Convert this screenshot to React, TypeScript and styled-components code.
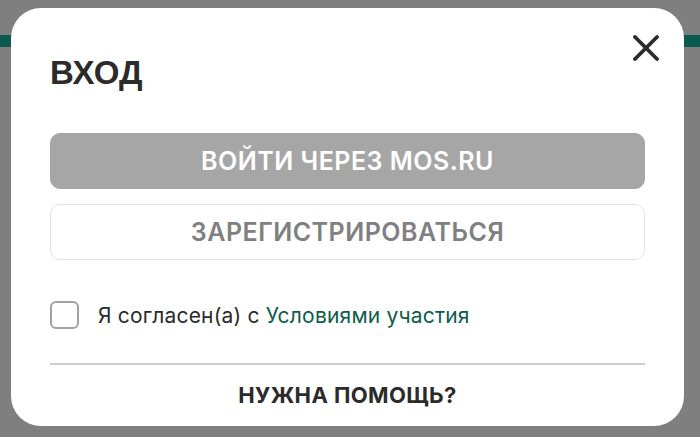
import styled, { createGlobalStyle } from "styled-components";

const GlobalStyle = createGlobalStyle`
  html, body {
    margin: 0;
    padding: 0;
    background: #7f7f7f;
  }
  body {
    font-family: Inter, "Noto Sans", sans-serif;
  }
  * {
    box-sizing: border-box;
  }
`;

function CloseIcon() {
  return (
    <svg width="26" height="26" viewBox="0 0 26 26" aria-hidden="true">
      <path
        d="M2 2 L24 24 M24 2 L2 24"
        stroke="#2b2b2b"
        strokeWidth="3.8"
        strokeLinecap="round"
      />
    </svg>
  );
}

function App() {
  return (
    <>
      <GlobalStyle />
      <Backdrop>
        <TealStrip />
        <Modal>
          <Header>
            <Title>ВХОД</Title>
            <CloseButton aria-label="Закрыть">
              <CloseIcon />
            </CloseButton>
          </Header>
          <Actions>
            <Button $variant="primary">ВОЙТИ ЧЕРЕЗ MOS.RU</Button>
            <Button $variant="outline">ЗАРЕГИСТРИРОВАТЬСЯ</Button>
          </Actions>
          <Agreement>
            <CheckBox />
            <span>
              Я согласен(а) с <AgreementLink href="#">Условиями участия</AgreementLink>
            </span>
          </Agreement>
          <Divider />
          <HelpLink>НУЖНА ПОМОЩЬ?</HelpLink>
        </Modal>
      </Backdrop>
    </>
  );
}

export default App;

const Backdrop = styled.div`
  position: relative;
  width: 700px;
  height: 437px;
  padding: 8px 16px 0 11px;
  background: #7f7f7f;
  overflow: hidden;
`;

const TealStrip = styled.div`
  position: absolute;
  left: 0;
  right: 0;
  top: 35px;
  height: 12px;
  background: #0b5a50;
`;

const Modal = styled.div`
  position: relative;
  width: 673px;
  height: 418px;
  padding: 26px 39px 0 39px;
  background: #fff;
  border-radius: 30px;
`;

const Header = styled.div`
  display: flex;
  align-items: flex-start;
  justify-content: space-between;
  height: 99px;
`;

const Title = styled.h2`
  margin: 22px 0 0;
  font-family: "Liberation Sans", Arial, sans-serif;
  font-size: 33px;
  font-weight: 700;
  color: #2b2b2b;
  line-height: 1;
`;

const CloseButton = styled.button`
  display: flex;
  margin: 1px -14px 0 0;
  padding: 0;
  border: none;
  background: none;
  cursor: pointer;
`;

const Actions = styled.div`
  display: flex;
  flex-direction: column;
  gap: 15px;
`;

const Button = styled.button<{ $variant: "primary" | "outline" }>`
  height: 56px;
  border-radius: 10px;
  font-family: Inter, "Noto Sans", sans-serif;
  font-size: 25px;
  font-weight: 600;
  letter-spacing: 0.5px;
  cursor: pointer;
  border: 1px solid ${({ $variant }) => ($variant === "primary" ? "#a6a6a6" : "#e3e3e3")};
  background: ${({ $variant }) => ($variant === "primary" ? "#a6a6a6" : "#fff")};
  color: ${({ $variant }) => ($variant === "primary" ? "#fff" : "#808080")};
`;

const Agreement = styled.label`
  display: flex;
  align-items: center;
  gap: 19px;
  margin-top: 41px;
  font-size: 21px;
  letter-spacing: 0.2px;
  color: #2b2b2b;
`;

const CheckBox = styled.span`
  width: 29px;
  height: 28px;
  border: 2.5px solid #a2a2a2;
  border-radius: 6px;
`;

const AgreementLink = styled.a`
  color: #0d5c4c;
  text-decoration: none;
`;

const Divider = styled.hr`
  margin: 34px 0 0;
  border: none;
  border-top: 2px solid #cccccc;
`;

const HelpLink = styled.a`
  display: block;
  margin-top: 17px;
  text-align: center;
  font-size: 22px;
  font-weight: 700;
  letter-spacing: 0.4px;
  color: #2b2b2b;
`;
